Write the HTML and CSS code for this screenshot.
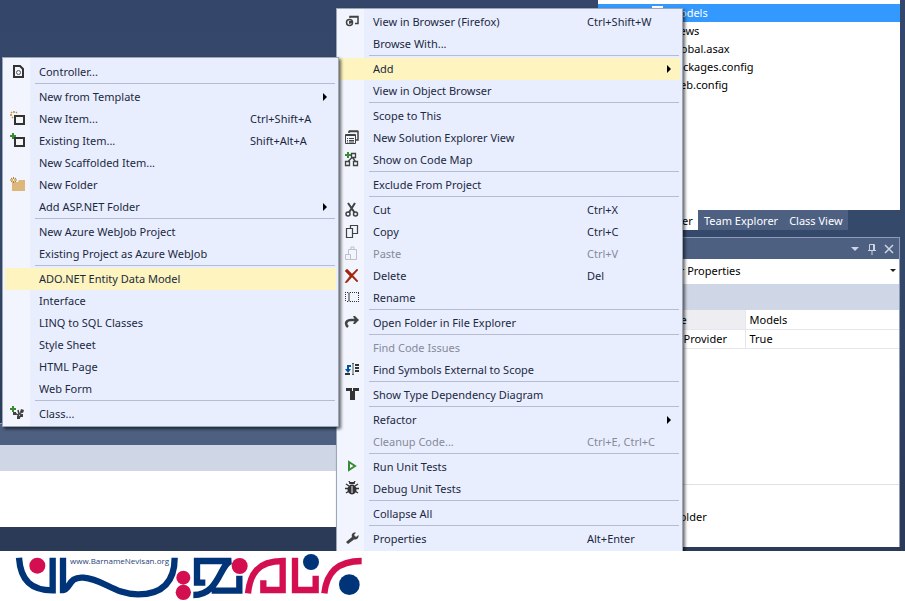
FILE: index.html
```
<!DOCTYPE html>
<html lang="en">

<head>
	<meta charset="utf-8">
	<title>Add ADO.NET Entity Data Model</title>
	<link rel="stylesheet" href="styles.css">
</head>

<body>
	<main class="ide">
		<section class="editor">
			<div class="editor-space"></div>
			<div class="output">
				<div class="output-title"></div>
				<div class="output-toolbar"></div>
				<div class="output-body"></div>
			</div>
		</section>

		<aside class="dock">
			<ul class="tree">
				<li class="selected"><svg class="folder" viewBox="0 0 16 16"><path d="M3 1h11v12H3z" fill="#fff"/></svg>Models</li>
				<li>Views</li>
				<li>Global.asax</li>
				<li>packages.config</li>
				<li>Web.config</li>
			</ul>
			<div class="tabs">
				<button class="tab active">Solution Explorer</button>
				<button class="tab">Team Explorer</button>
				<button class="tab">Class View</button>
			</div>
			<section class="properties">
				<header class="properties-title">
					<button aria-label="Window position"><svg viewBox="0 0 12 12"><path d="M2 4h8L6 8z" fill="#ced4e3"/></svg></button>
					<button aria-label="Auto hide"><svg viewBox="0 0 12 12"><path d="M3.5 7V1.5h5V7M7.5 1.5V7M2 7.5h8M6 8v4" fill="none" stroke="#ced4e3"/></svg></button>
					<button aria-label="Close"><svg viewBox="0 0 12 12"><path d="M2 2l8 8M10 2l-8 8" stroke="#ced4e3" stroke-width="1.5"/></svg></button>
				</header>
				<button class="object-picker">Models Folder Properties <span class="caret"></span></button>
				<div class="properties-toolbar"></div>
				<table class="property-grid">
					<tr class="current">
						<th scope="row">Folder Name</th>
						<td>Models</td>
					</tr>
					<tr>
						<th scope="row">Namespace Provider</th>
						<td>True</td>
					</tr>
				</table>
				<div class="description">Name of this folder</div>
			</section>
		</aside>

		<ul class="menu main-menu">
			<li><button><svg viewBox="0 0 16 16"><path d="M6 4V2.500h8v7h-3M6 3h8" fill="none" stroke="#424242" stroke-width="1.500"/><circle cx="5.500" cy="8.500" r="3" fill="none" stroke="#424242" stroke-width="1.500"/><path d="M5 7h3v2l-3 1z" fill="#424242"/></svg><span>View in Browser (Firefox)</span><kbd>Ctrl+Shift+W</kbd></button></li>
			<li><button><svg viewBox="0 0 16 16"></svg><span>Browse With...</span></button></li>
			<li class="separator"></li>
			<li class="has-submenu">
				<button class="highlight"><svg viewBox="0 0 16 16"></svg><span>Add</span><i class="arrow"></i></button>
				<ul class="menu submenu">
					<li><button><svg viewBox="0 0 16 16"><path d="M4 2h6l3 3v8H4z" fill="none" stroke="#333" stroke-width="2"/><circle cx="8.500" cy="8.500" r="2" fill="none" stroke="#555"/></svg><span>Controller...</span></button></li>
					<li class="separator"></li>
					<li><button><svg viewBox="0 0 16 16"></svg><span>New from Template</span><i class="arrow"></i></button></li>
					<li><button><svg viewBox="0 0 16 16"><path d="M5 5h9v8H5z" fill="#f6f6f6" stroke="#333" stroke-width="2"/><path d="M4 0v2M1 1l1 1M0 4h2M2 7l1-1M7 1L6 2" stroke="#c58a2c" stroke-width="1.5"/></svg><span>New Item...</span><kbd>Ctrl+Shift+A</kbd></button></li>
					<li><button><svg viewBox="0 0 16 16"><path d="M5 5h9v8H5z" fill="#f6f6f6" stroke="#333" stroke-width="2"/><path d="M0 2h2V0h2v2h2v2H4v2H2V4H0z" fill="#388a34"/></svg><span>Existing Item...</span><kbd>Shift+Alt+A</kbd></button></li>
					<li><button><svg viewBox="0 0 16 16"></svg><span>New Scaffolded Item...</span></button></li>
					<li><button><svg viewBox="0 0 16 16"><path d="M2 5h6l1-2h6v11H2z" fill="#dcb67a"/><path d="M3.500 0v6M0 3h7M1 1l5 4M6 1L1 5" stroke="#b87d20"/><circle cx="3.500" cy="3" r="1" fill="#fff"/></svg><span>New Folder</span></button></li>
					<li><button><svg viewBox="0 0 16 16"></svg><span>Add ASP.NET Folder</span><i class="arrow"></i></button></li>
					<li class="separator"></li>
					<li><button><svg viewBox="0 0 16 16"></svg><span>New Azure WebJob Project</span></button></li>
					<li><button><svg viewBox="0 0 16 16"></svg><span>Existing Project as Azure WebJob</span></button></li>
					<li class="separator"></li>
					<li><button class="highlight"><svg viewBox="0 0 16 16"></svg><span>ADO.NET Entity Data Model</span></button></li>
					<li><button><svg viewBox="0 0 16 16"></svg><span>Interface</span></button></li>
					<li><button><svg viewBox="0 0 16 16"></svg><span>LINQ to SQL Classes</span></button></li>
					<li><button><svg viewBox="0 0 16 16"></svg><span>Style Sheet</span></button></li>
					<li><button><svg viewBox="0 0 16 16"></svg><span>HTML Page</span></button></li>
					<li><button><svg viewBox="0 0 16 16"></svg><span>Web Form</span></button></li>
					<li class="separator"></li>
					<li><button><svg viewBox="0 0 16 16"><path d="M0 2h2V0h2v2h2v2H4v2H2V4H0z" fill="#388a34"/><path d="M5 7l3 2 5-4M8 9l2 3M8 4l1 4" fill="none" stroke="#424242" stroke-width="1.5"/><path d="M3 6h3v3H3zM7 10h3v3H7zM11 3l3 1-1 3-3-1zM10 8h3v3h-3z" fill="#424242"/></svg><span>Class...</span></button></li>
				</ul>
			</li>
			<li><button><svg viewBox="0 0 16 16"></svg><span>View in Object Browser</span></button></li>
			<li class="separator"></li>
			<li><button><svg viewBox="0 0 16 16"></svg><span>Scope to This</span></button></li>
			<li><button><svg viewBox="0 0 16 16"><path d="M5 3V1.500h9V10H12M5 1h9" fill="none" stroke="#424242" stroke-width="1.500"/><path d="M1.500 4.500h10v9h-10zM1.500 5.500h10M3 8.500h1m1 0h5M3 10.500h1m1 0h5M3 12h1m1 0h5" fill="none" stroke="#424242"/></svg><span>New Solution Explorer View</span></button></li>
			<li><button><svg viewBox="0 0 16 16"><path d="M7.500 1.500h4v4h-4zM1.500 9.500h4v4h-4zM9.500 9.500h4v4h-4zM8 5.500l-4 4M8.500 5.500l3 4" fill="none" stroke="#424242" stroke-width="1.300"/><path d="M1 2h2V0h2v2h2v2H5v2H3V4H1z" fill="#388a34"/></svg><span>Show on Code Map</span></button></li>
			<li class="separator"></li>
			<li><button><svg viewBox="0 0 16 16"></svg><span>Exclude From Project</span></button></li>
			<li class="separator"></li>
			<li><button><svg viewBox="0 0 16 16"><path d="M4 1l6.500 9.500M11 1L5 10.500" stroke="#424242" stroke-width="2"/><circle cx="4" cy="12" r="2" fill="none" stroke="#424242" stroke-width="1.500"/><circle cx="11.500" cy="12" r="2" fill="none" stroke="#424242" stroke-width="1.500"/></svg><span>Cut</span><kbd>Ctrl+X</kbd></button></li>
			<li><button><svg viewBox="0 0 16 16"><path d="M2.500 4.500h6v9h-6zM6.500 4V1.500h7v8H9" fill="none" stroke="#424242" stroke-width="1.200"/></svg><span>Copy</span><kbd>Ctrl+C</kbd></button></li>
			<li><button disabled><svg viewBox="0 0 16 16"><path d="M1.500 8.500h5v5h-5zM4.500 8V3.500h8v10h-6M6 3.500h5M7 3V1h3v2" fill="none" stroke="#bfc1c9"/></svg><span>Paste</span><kbd>Ctrl+V</kbd></button></li>
			<li><button><svg viewBox="0 0 16 16"><path d="M1 3l2-2 5 5 5-5 1 1-5 5.500 5 5.500-1 1-5-5-5 5.500H1L6 8z" fill="#a1260d" stroke="#a1260d" stroke-width=".5"/></svg><span>Delete</span><kbd>Del</kbd></button></li>
			<li><button><svg viewBox="0 0 16 16"><path d="M1.500 2v10M6 2.500h9M6 11.500h9M14.500 3v8" fill="none" stroke="#333" stroke-dasharray="1 1"/><path d="M3 2.500h1l1 1v7l-1 1H3M7 2.500H6l-1 1M7 11.500H6l-1-1" fill="none" stroke="#333"/></svg><span>Rename</span></button></li>
			<li class="separator"></li>
			<li><button><svg viewBox="0 0 16 16"><path d="M4 12C0 8 3 5 7 5h5" fill="none" stroke="#424242" stroke-width="2.500"/><path d="M9 1h2l4 4-4 4H9l2-4z" fill="#424242"/></svg><span>Open Folder in File Explorer</span></button></li>
			<li class="separator"></li>
			<li><button disabled><svg viewBox="0 0 16 16"></svg><span>Find Code Issues</span></button></li>
			<li><button><svg viewBox="0 0 16 16"><path d="M7 4H4v4" fill="none" stroke="#00539c" stroke-width="2"/><path d="M1 7h6l-3 4z" fill="#00539c"/><path d="M1 11h5v2H1zM11 2h4v2h-4zM11 5h4v2h-4zM11 8h4v2h-4z" fill="#333"/><path d="M8 1.500h2M9 2v10M8 12.500h2" stroke="#555" fill="none"/></svg><span>Find Symbols External to Scope</span></button></li>
			<li class="separator"></li>
			<li><button><svg viewBox="0 0 16 16"><path d="M2 1h6v3H2zM9 1h6v3H9zM6 4h5v9H6z" fill="#333"/></svg><span>Show Type Dependency Diagram</span></button></li>
			<li class="separator"></li>
			<li><button><svg viewBox="0 0 16 16"></svg><span>Refactor</span><i class="arrow"></i></button></li>
			<li><button disabled><svg viewBox="0 0 16 16"></svg><span>Cleanup Code...</span><kbd>Ctrl+E, Ctrl+C</kbd></button></li>
			<li class="separator"></li>
			<li><button><svg viewBox="0 0 16 16"><path d="M5 3v8l6-4z" fill="#fff" stroke="#388a34" stroke-width="2"/></svg><span>Run Unit Tests</span></button></li>
			<li><button><svg viewBox="0 0 16 16"><path d="M5 0l1 2M11 0l-1 2M2 3l3 2M14 3l-3 2M1 7.500h14M2 12l3-2M14 12l-3-2" stroke="#333" stroke-width="1.300"/><path d="M5 3l1-2h4l1 2z" fill="#333"/><ellipse cx="8" cy="8.500" rx="4.500" ry="5" fill="#333"/><path d="M8 5v7" stroke="#eef"/></svg><span>Debug Unit Tests</span></button></li>
			<li class="separator"></li>
			<li><button><svg viewBox="0 0 16 16"></svg><span>Collapse All</span></button></li>
			<li class="separator"></li>
			<li><button><svg viewBox="0 0 16 16"><path d="M2 11l6-5c-1-3 1-5 4-4.500L10 4l2 2 2.500-2c.5 3-1.500 5-4.500 4.500L4 13z" fill="#424242"/></svg><span>Properties</span><kbd>Alt+Enter</kbd></button></li>
		</ul>
	</main>

	<footer class="site-logo">
		<svg viewBox="0 0 1140 150" role="img" aria-label="BarnameNevisan">
			<g fill="none" stroke="#003478" stroke-width="19">
				<path d="M57 20C62 90 95 118 158 118V20"/>
				<path d="M189 20V117C212 116 204 76 250 80C310 84 342 130 414 130C490 130 524 90 524 20"/>
				<path d="M616 95H591V30H694C660 35 659 132 580 132M635 119H718V74"/>
			</g>
			<g fill="none" stroke="#d30f50" stroke-width="19">
				<path d="M744 127C750 70 772 30 848 30V117H790V88"/>
				<path d="M885 20V117H947V74"/>
				<path d="M973 127C980 65 1012 30 1085 30"/>
			</g>
			<g fill="#d30f50">
				<circle cx="112" cy="44" r="24"/>
				<circle cx="550" cy="80" r="21"/>
				<circle cx="550" cy="124" r="23"/>
				<circle cx="719" cy="45" r="24"/>
			</g>
			<g fill="#003478">
				<circle cx="933" cy="33" r="24"/>
				<circle cx="1048" cy="101" r="31"/>
			</g>
		</svg>
		<a class="site-link" href="#">www.BarnameNevisan.org</a>
	</footer>
</body>

</html>
```
FILE: styles.css
```
* {
	box-sizing: border-box;
}

body {
	margin: 0;
	background: #fff;
	font-family: "Noto Sans", "Segoe UI", sans-serif;
	font-size: 11px;
	color: #000;
}

button {
	border: none;
	padding: 0;
	background: none;
	font: inherit;
	color: inherit;
	text-align: left;
}

ul {
	list-style: none;
	margin: 0;
	padding: 0;
}

.ide {
	position: relative;
	display: flex;
	gap: 5px;
	overflow: hidden;
	padding: 0 5px 4px 0;
	background: linear-gradient(#34476a, #35496a 45%, #2b3a57 90%);
}

.editor {
	flex: 1;
	display: flex;
	flex-direction: column;
	padding-bottom: 20px;
}

.editor-space {
	flex: 1;
}

.output-title {
	height: 22px;
	border-top: 1px solid #8e9bbc;
	background: #4d6082;
}

.output-toolbar {
	height: 26px;
	background: #cfd6e5;
}

.output-body {
	height: 56px;
	background: #fff;
}

/* right side */
.dock {
	width: 302px;
}

.tree {
	min-height: 210px;
	padding-top: 4px;
	background: #fff;
}

.tree li {
	position: relative;
	height: 18px;
	padding-left: 72px;
	line-height: 18px;
}

.tree .selected {
	background: #3399ff;
	color: #fff;
}

.folder {
	position: absolute;
	left: 51px;
	top: 1px;
	width: 16px;
	height: 16px;
}

.tabs {
	display: flex;
	height: 20px;
}

.tab {
	padding: 0 5px 0 6px;
	background: #4d6082;
	color: #fff;
	white-space: nowrap;
}

.tab.active {
	width: 100px;
	background: #fff;
	color: #000;
}

.properties {
	margin-top: 7px;
	border: 1px solid #8e9bbc;
	border-width: 1px 1px 0 0;
	background: #fff;
}

.properties-title {
	display: flex;
	justify-content: flex-end;
	align-items: center;
	gap: 5px;
	height: 21px;
	padding-right: 4px;
	background: #4d6082;
}

.properties-title button {
	width: 12px;
	height: 12px;
}

.properties-title svg {
	display: block;
}

.object-picker {
	display: flex;
	justify-content: space-between;
	align-items: center;
	width: 100%;
	height: 25px;
	padding: 0 3px 2px 13px;
}

.caret {
	border: 3px solid transparent;
	border-top-color: #1e1e1e;
	border-bottom: none;
}

.properties-toolbar {
	height: 26px;
	background: #cfd6e5;
}

.property-grid {
	width: 100%;
	border-collapse: collapse;
	table-layout: fixed;
}

.property-grid th,
.property-grid td {
	height: 19px;
	padding: 0 4px;
	border-bottom: 1px solid #e6e6ec;
	font-weight: normal;
	text-align: left;
}

.property-grid th {
	width: 147px;
	padding-left: 22px;
	border-right: 1px solid #e6e6ec;
	white-space: nowrap;
}

.property-grid .current th {
	background: #eeeef2;
}

.description {
	height: 63px;
	margin-top: 135px;
	padding: 23px 9px 0;
	border-top: 1px solid #e0e0e6;
	line-height: 18px;
}

/* menus */
.menu {
	position: absolute;
	border: 1px solid #9ba7b7;
	background: linear-gradient(90deg, #f2f4fe 27px, #e9eeff 27px);
	box-shadow: 2px 2px 3px rgba(0, 0, 0, 0.6);
	color: #1b293e;
}

.main-menu {
	top: 8px;
	right: 222px;
	width: 347px;
	padding: 2px;
}

.submenu {
	top: -1px;
	right: 100%;
	width: 337px;
	padding: 3px 2px 1px;
}

.has-submenu {
	position: relative;
}

.menu button {
	display: flex;
	align-items: center;
	width: 100%;
	height: 22px;
	padding-left: 5px;
}

.menu button svg {
	width: 16px;
	height: 16px;
	margin-right: 13px;
}

.menu span {
	flex: 1;
	padding-bottom: 2px;
}

.menu kbd {
	width: 93px;
	padding-bottom: 2px;
	font: inherit;
}

.submenu kbd {
	width: 86px;
}

.menu button:disabled {
	color: #858a99;
}

.menu .highlight {
	background: #fdf4bf;
}

.arrow {
	margin-right: 9px;
	border: 4px solid transparent;
	border-left-color: #000;
	border-right: none;
}

.separator {
	height: 3px;
	margin: 0 1px 0 30px;
	border-top: 1px solid #b5bdd3;
}

/* logo and address under the window */
.site-logo {
	position: relative;
	height: 50px;
}

.site-logo svg {
	display: block;
	width: 380px;
	height: 50px;
}

.site-link {
	position: absolute;
	left: 70px;
	top: 4px;
	font-family: "Open Sans", sans-serif;
	font-size: 8px;
	line-height: 12px;
	color: #1f3f78;
	text-decoration: none;
}
```
